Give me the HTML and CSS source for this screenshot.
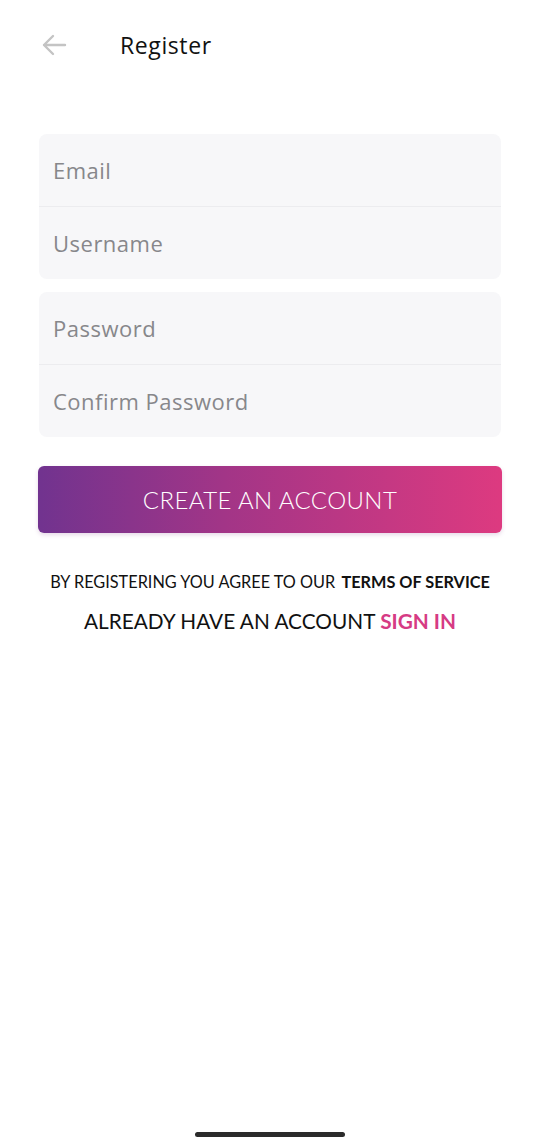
FILE: index.html
```html
<!DOCTYPE html>
<html>
    <head>
        <title>Register</title>
        <link rel="stylesheet" href="styles.css">
    </head>
    <body>
        <div id="screen">
            <div class="header">
                <svg class="back" width="26" height="22" viewBox="0 0 26 22">
                    <path d="M24 11H3M12 2L3 11l9 9" fill="none" stroke="#c4c4c4" stroke-width="2.4" stroke-linecap="round" stroke-linejoin="round"/>
                </svg>
                <div class="title">Register</div>
            </div>
            <div class="group">
                <div class="field">Email</div>
                <div class="field">Username</div>
            </div>
            <div class="group">
                <div class="field">Password</div>
                <div class="field">Confirm Password</div>
            </div>
            <button class="create">CREATE AN ACCOUNT</button>
            <div class="terms">BY REGISTERING YOU AGREE TO OUR <b>TERMS OF SERVICE</b></div>
            <div class="signin">ALREADY HAVE AN ACCOUNT <b>SIGN IN</b></div>
            <div class="spacer"></div>
            <div class="home-bar"></div>
        </div>
    </body>
</html>
```

FILE: styles.css
```css
body {
    margin: 0;
    background: #fff;
}

#screen {
    display: flex;
    flex-direction: column;
    height: 1141px;
    padding: 0 38px;
    box-sizing: border-box;
    font-family: "Open Sans", Roboto, sans-serif;
}

.header {
    display: flex;
    align-items: center;
    height: 90px;
    padding-left: 3px;
}

.title {
    margin-left: 53px;
    font-size: 23px;
    color: #111;
    letter-spacing: 0.6px;
}

.group {
    margin-top: 44px;
    margin-left: 1px;
    margin-right: 1px;
    background-color: #f7f7f9;
    border-radius: 8px;
}

.group + .group {
    margin-top: 13px;
}

.field {
    height: 72px;
    display: flex;
    align-items: center;
    padding-left: 14px;
    font-size: 22px;
    letter-spacing: 0.5px;
    color: #87878b;
}

.field + .field {
    border-top: 1px solid #ececef;
}

.create {
    margin-top: 29px;
    height: 67px;
    border: none;
    border-radius: 6px;
    background: linear-gradient(90deg, #71338f 0%, #a23587 40%, #dd3a80 100%);
    box-shadow: 0 2px 4px rgba(120, 50, 130, 0.18);
    color: #fff;
    font-family: Lato, sans-serif;
    font-weight: 300;
    font-size: 24px;
    letter-spacing: 0.4px;
}

.terms {
    margin-top: 39px;
    text-align: center;
    font-family: Lato, sans-serif;
    font-size: 16.3px;
    color: #111;
}

.terms b {
    margin-left: 2px;
    font-weight: 700;
}

.signin {
    margin-top: 17px;
    text-align: center;
    font-family: Lato, sans-serif;
    font-size: 20.8px;
    color: #111;
}

.signin b {
    color: #d63b84;
    font-weight: 700;
}

.spacer {
    flex: 1;
}

.home-bar {
    align-self: center;
    width: 150px;
    height: 5px;
    border-radius: 3px;
    background-color: #2b2b2b;
    margin-bottom: 4px;
}
```
